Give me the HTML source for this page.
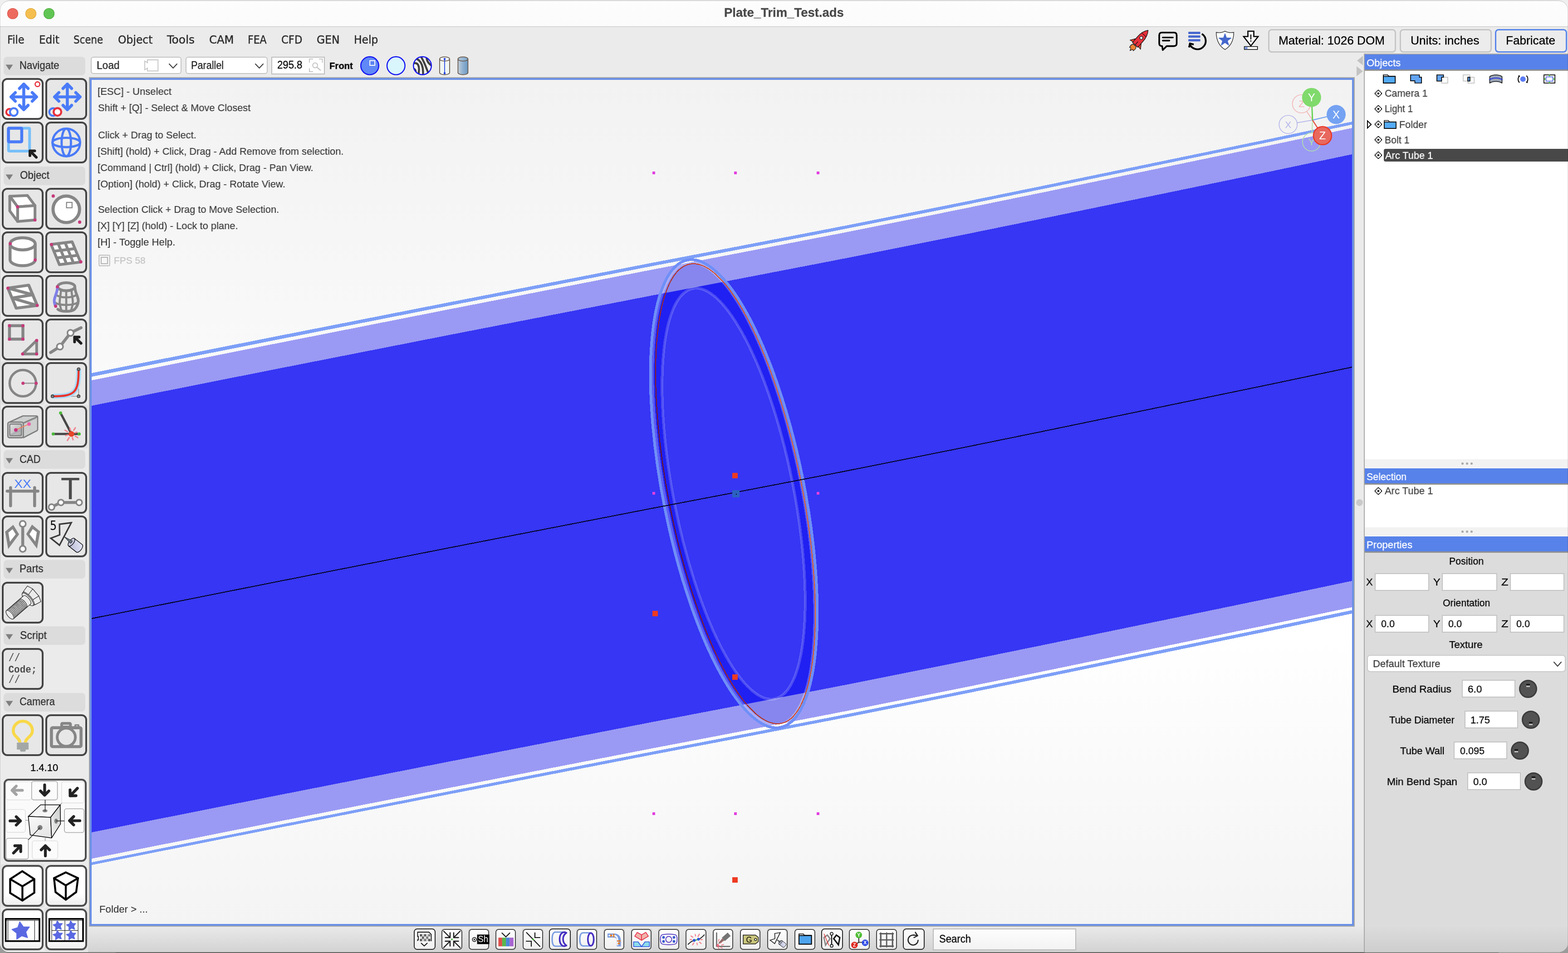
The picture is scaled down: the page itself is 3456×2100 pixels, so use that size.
<!DOCTYPE html>
<html lang="en"><head><meta charset="utf-8"><title>Plate_Trim_Test.ads</title>
<style>
*{box-sizing:border-box;margin:0;padding:0}
html,body{width:3456px;height:2100px;overflow:hidden;background:linear-gradient(#efefef 0,#efefef 50%,#a4a4a4 98%,#9a9a9a 100%)}
body{font-family:"Liberation Sans",sans-serif;color:#000;position:relative}
#app{position:absolute;left:0;top:0;width:3456px;height:2100px;overflow:hidden;background:#ebebeb;clip-path:inset(1px 0 0.5px 0 round 21px)}
#winframe{left:0;top:1px;width:3456px;height:2098.5px;border-radius:21px;box-shadow:inset 0 1px 0 #bdbdbd,inset 0 0 0 1px rgba(0,0,0,0.13),inset 0 -1.5px 0 rgba(0,0,0,0.42);pointer-events:none}
.t,svg{will-change:transform}
#app *{position:absolute}
button{font:inherit;padding:0}
.t{white-space:pre;line-height:1;transform-origin:0 0;display:block;font-weight:400;-webkit-text-stroke-width:0.3px}
svg{overflow:visible}
.titlebar{left:0;top:0;width:3456px;height:58px;background:linear-gradient(#fdfdfd,#fbfbfb)}
.titlebar-line{left:0;top:58px;width:3456px;height:1px;background:#c8c8c8}
.tl{width:24px;height:24px;border-radius:50%;top:18px}
.hdr{background:#dcdcdc;border-radius:8px;left:8px;width:180px;height:41px}

.bbar{left:194px;top:2042px;width:2812px;height:58px;background:linear-gradient(#e9e9e9,#d2d2d2)}
.bb{top:2047.4px;width:45.2px;height:45.2px;border:2px solid #474747;border-radius:7px;background:linear-gradient(#fdfdfd,#f0f0f0)}
.bb.big{top:2046.2px;width:47.6px;height:47.2px;border:2px solid #2a2a2a;border-radius:7.5px}
.bb.big svg{left:-0.8px;top:-1.3px}
.bbk{top:2046px;width:48px;height:48px;background:#dbdbdb;border-radius:3px}
.search{left:2056.4px;top:2046.3px;width:315.4px;height:47.3px;border:2px solid #bababa;background:linear-gradient(#fdfdfd,#f3f3f3)}

.menu{left:0;top:60px;width:1000px;height:60px}
.combo{top:125px;height:38px;background:#fff;border:2px solid #c4c4c4;border-radius:6px}
.btn{top:64px;height:52px;border:3px solid #c6c6c6;border-radius:8px;background:#ececec}
.btn.pri{border-color:#5a86ea}

.lp{left:0;top:120px;width:196px;height:1980px}
.tb{width:92px;height:92px;border:4px solid #454545;border-radius:12px;background:#e7e7e7}
.tb.on{background:#fff}
.tb.wh{background:linear-gradient(#fff 70%,#efefef);border-color:#4c4c4c}
.tb svg{left:-4px;top:-4px}
.hl{width:96px;height:96px;background:#e1e1e1;border-radius:4px}

.rp{left:3006px;top:118px;width:450px;height:1982px;background:#a8a8a8}
.rp-in{left:3008px;top:120px;width:448px;height:1980px;background:#fff}
.ph{left:3008px;width:448px;height:36px;background:#5782e9;border-bottom:3px solid #8f8f8f}
.split{left:3008px;width:448px;height:19px;background:#f2f2f2}
.dot3{width:5px;height:5px;border-radius:50%;background:#a8a8a8}
.props{left:3008px;top:1218px;width:448px;height:882px;background:#dcdcdc}
.fld{background:#fff;border:2px solid #c3c3c3;height:39px}
.knob{width:40px;height:40px;border-radius:50%;background:#525252;border:3px solid #3b3b3b}
.rowsel{left:3050px;top:328px;width:410px;height:28px;background:#484848;border-radius:4px}
</style></head>
<body><main id="app">
<header class="titlebar"></header><div class="titlebar-line"></div><div style="left:0;top:59px;width:3456px;height:1px;background:#e2e2e2"></div>
<div class="tl" style="left:16px;background:#ed6a5f;box-shadow:inset 0 0 0 1px #d5554b"></div>
<div class="tl" style="left:56px;background:#f5bf4f;box-shadow:inset 0 0 0 1px #d9a33b"></div>
<div class="tl" style="left:96px;background:#61c554;box-shadow:inset 0 0 0 1px #4fa73f"></div>
<h1 class="t" style='left:1595.65px;top:15.02px;font-size:27.03px;transform:scaleX(1.0179);color:#484848;font-weight:700;'>Plate_Trim_Test.ads</h1>
<section id="viewport" style="left:196px;top:170px;width:2790px;height:1872px;background:#a9a9a9"></section>
<div style="left:198px;top:172px;width:2786px;height:1868px;background:#6a90e6"></div>
<svg id="scene" style="left:202px;top:176px" width="2778" height="1860" viewBox="202 176 2778 1860" shape-rendering="crispEdges">
<defs><linearGradient id="bgv" x1="0" y1="0" x2="0" y2="1"><stop offset="0" stop-color="#f2f2f2"/><stop offset="0.5" stop-color="#fdfdfd"/><stop offset="0.66" stop-color="#ffffff"/><stop offset="1" stop-color="#f4f4f4"/></linearGradient><clipPath id="vclip"><rect x="202" y="176" width="2778" height="1860"/></clipPath></defs>
<rect x="202" y="176" width="2778" height="1860" fill="url(#bgv)"/>
<g clip-path="url(#vclip)">
<polygon points="202,822.0 600,742.9 1000,664.2 1440,578.6 1620,544.2 1850,499.8 2100,450.0 2300,409.2 2800,305.9 2980,268.0 2980,274.5 2800,312.5 2300,416.1 2100,457.0 1850,507.0 1620,551.5 1440,585.9 1000,671.7 600,750.7 202,830.0" fill="#7d9ff7"/>
<polygon points="202,838.0 600,758.6 1000,679.6 1440,593.7 1620,559.2 1850,514.7 2100,464.6 2300,423.7 2800,320.0 2980,282.0 2980,1338.0 2800,1375.9 2300,1479.2 2100,1520.0 1850,1569.8 1620,1614.2 1440,1648.6 1000,1734.2 600,1812.9 202,1892.0" fill="#9a9af4"/>
<polygon points="202,894.0 600,814.9 1000,736.2 1440,650.6 1620,616.2 1850,571.8 2100,522.0 2300,481.2 2800,377.9 2980,340.0 2980,1280.0 2800,1317.9 2300,1421.2 2100,1462.0 1850,1511.8 1620,1556.2 1440,1590.6 1000,1676.2 600,1754.9 202,1834.0" fill="#3636f4"/>
<polygon points="202,1900.0 600,1820.7 1000,1741.7 1440,1655.9 1620,1621.5 1850,1577.0 2100,1527.0 2300,1486.1 2800,1382.5 2980,1344.5 2980,1352.0 2800,1389.9 2300,1493.2 2100,1534.0 1850,1583.8 1620,1628.2 1440,1662.6 1000,1748.2 600,1826.9 202,1906.0" fill="#7d9ff7"/>
<defs><clipPath id="dk"><polygon points="202,894.0 600,814.9 1000,736.2 1440,650.6 1620,616.2 1850,571.8 2100,522.0 2300,481.2 2800,377.9 2980,340.0 2980,1280.0 2800,1317.9 2300,1421.2 2100,1462.0 1850,1511.8 1620,1556.2 1440,1590.6 1000,1676.2 600,1754.9 202,1834.0"/></clipPath><linearGradient id="redg" gradientUnits="userSpaceOnUse" x1="1445" y1="0" x2="1797" y2="0"><stop offset="0" stop-color="#4a0618"/><stop offset="0.2" stop-color="#a02418"/><stop offset="0.5" stop-color="#c83418"/><stop offset="0.8" stop-color="#e8601c"/><stop offset="1" stop-color="#f07828"/></linearGradient></defs>
<g id="ring" shape-rendering="crispEdges">
<path d="M1761.2,1059.2 L1769.4,1103.5 L1776.5,1147.6 L1782.4,1191.2 L1787.0,1234.1 L1790.3,1275.8 L1792.3,1316.1 L1793.0,1354.7 L1792.3,1391.2 L1790.3,1425.5 L1787.0,1457.2 L1782.4,1486.0 L1776.5,1511.9 L1769.4,1534.5 L1761.2,1553.7 L1751.8,1569.3 L1741.4,1581.4 L1730.1,1589.6 L1717.9,1594.0 L1705.0,1594.6 L1691.4,1591.3 L1677.2,1584.2 L1662.5,1573.3 L1647.6,1558.8 L1632.3,1540.6 L1617.0,1519.0 L1601.7,1494.1 L1586.4,1466.2 L1571.4,1435.3 L1556.8,1401.8 L1542.6,1365.9 L1529.0,1327.9 L1516.1,1288.1 L1503.9,1246.7 L1492.6,1204.2 L1482.2,1160.7 L1472.8,1116.8 L1464.6,1072.5 L1457.5,1028.4 L1451.6,984.8 L1447.0,941.9 L1443.7,900.2 L1441.7,859.9 L1441.0,821.3 L1441.7,784.8 L1443.7,750.5 L1447.0,718.8 L1451.6,690.0 L1457.5,664.1 L1464.6,641.5 L1472.8,622.3 L1482.2,606.7 L1492.6,594.6 L1503.9,586.4 L1516.1,582.0 L1529.0,581.4 L1542.6,584.7 L1556.8,591.8 L1571.5,602.7 L1586.4,617.2 L1601.7,635.4 L1617.0,657.0 L1632.3,681.9 L1647.6,709.8 L1662.6,740.7 L1677.2,774.2 L1691.4,810.1 L1705.0,848.1 L1717.9,887.9 L1730.1,929.3 L1741.4,971.8 L1751.8,1015.3Z M1746.5,1062.2 L1753.8,1101.7 L1760.1,1141.1 L1765.4,1180.1 L1769.5,1218.4 L1772.4,1255.7 L1774.2,1291.7 L1774.8,1326.2 L1774.1,1358.8 L1772.3,1389.4 L1769.3,1417.7 L1765.1,1443.5 L1759.8,1466.6 L1753.4,1486.8 L1746.0,1504.0 L1737.6,1518.0 L1728.3,1528.7 L1718.1,1536.1 L1707.2,1540.1 L1695.5,1540.6 L1683.3,1537.7 L1670.6,1531.4 L1657.5,1521.7 L1644.0,1508.6 L1630.4,1492.4 L1616.6,1473.1 L1602.9,1450.9 L1589.2,1425.9 L1575.8,1398.4 L1562.7,1368.5 L1550.0,1336.4 L1537.8,1302.5 L1526.2,1266.9 L1515.3,1230.0 L1505.2,1191.9 L1495.9,1153.1 L1487.5,1113.8 L1480.2,1074.3 L1473.9,1034.9 L1468.6,995.9 L1464.5,957.6 L1461.6,920.3 L1459.8,884.3 L1459.2,849.8 L1459.9,817.2 L1461.7,786.6 L1464.7,758.3 L1468.9,732.5 L1474.2,709.4 L1480.6,689.2 L1488.0,672.0 L1496.4,658.0 L1505.7,647.3 L1515.9,639.9 L1526.8,635.9 L1538.5,635.4 L1550.7,638.3 L1563.4,644.6 L1576.5,654.3 L1590.0,667.4 L1603.6,683.6 L1617.4,702.9 L1631.1,725.1 L1644.8,750.1 L1658.2,777.6 L1671.3,807.5 L1684.0,839.6 L1696.2,873.5 L1707.8,909.1 L1718.7,946.0 L1728.8,984.1 L1738.1,1022.9Z" fill="#8686ee" fill-rule="evenodd"/>
<path d="M1761.2,1059.2 L1769.4,1103.5 L1776.5,1147.6 L1782.4,1191.2 L1787.0,1234.1 L1790.3,1275.8 L1792.3,1316.1 L1793.0,1354.7 L1792.3,1391.2 L1790.3,1425.5 L1787.0,1457.2 L1782.4,1486.0 L1776.5,1511.9 L1769.4,1534.5 L1761.2,1553.7 L1751.8,1569.3 L1741.4,1581.4 L1730.1,1589.6 L1717.9,1594.0 L1705.0,1594.6 L1691.4,1591.3 L1677.2,1584.2 L1662.5,1573.3 L1647.6,1558.8 L1632.3,1540.6 L1617.0,1519.0 L1601.7,1494.1 L1586.4,1466.2 L1571.4,1435.3 L1556.8,1401.8 L1542.6,1365.9 L1529.0,1327.9 L1516.1,1288.1 L1503.9,1246.7 L1492.6,1204.2 L1482.2,1160.7 L1472.8,1116.8 L1464.6,1072.5 L1457.5,1028.4 L1451.6,984.8 L1447.0,941.9 L1443.7,900.2 L1441.7,859.9 L1441.0,821.3 L1441.7,784.8 L1443.7,750.5 L1447.0,718.8 L1451.6,690.0 L1457.5,664.1 L1464.6,641.5 L1472.8,622.3 L1482.2,606.7 L1492.6,594.6 L1503.9,586.4 L1516.1,582.0 L1529.0,581.4 L1542.6,584.7 L1556.8,591.8 L1571.5,602.7 L1586.4,617.2 L1601.7,635.4 L1617.0,657.0 L1632.3,681.9 L1647.6,709.8 L1662.6,740.7 L1677.2,774.2 L1691.4,810.1 L1705.0,848.1 L1717.9,887.9 L1730.1,929.3 L1741.4,971.8 L1751.8,1015.3Z M1746.5,1062.2 L1753.8,1101.7 L1760.1,1141.1 L1765.4,1180.1 L1769.5,1218.4 L1772.4,1255.7 L1774.2,1291.7 L1774.8,1326.2 L1774.1,1358.8 L1772.3,1389.4 L1769.3,1417.7 L1765.1,1443.5 L1759.8,1466.6 L1753.4,1486.8 L1746.0,1504.0 L1737.6,1518.0 L1728.3,1528.7 L1718.1,1536.1 L1707.2,1540.1 L1695.5,1540.6 L1683.3,1537.7 L1670.6,1531.4 L1657.5,1521.7 L1644.0,1508.6 L1630.4,1492.4 L1616.6,1473.1 L1602.9,1450.9 L1589.2,1425.9 L1575.8,1398.4 L1562.7,1368.5 L1550.0,1336.4 L1537.8,1302.5 L1526.2,1266.9 L1515.3,1230.0 L1505.2,1191.9 L1495.9,1153.1 L1487.5,1113.8 L1480.2,1074.3 L1473.9,1034.9 L1468.6,995.9 L1464.5,957.6 L1461.6,920.3 L1459.8,884.3 L1459.2,849.8 L1459.9,817.2 L1461.7,786.6 L1464.7,758.3 L1468.9,732.5 L1474.2,709.4 L1480.6,689.2 L1488.0,672.0 L1496.4,658.0 L1505.7,647.3 L1515.9,639.9 L1526.8,635.9 L1538.5,635.4 L1550.7,638.3 L1563.4,644.6 L1576.5,654.3 L1590.0,667.4 L1603.6,683.6 L1617.4,702.9 L1631.1,725.1 L1644.8,750.1 L1658.2,777.6 L1671.3,807.5 L1684.0,839.6 L1696.2,873.5 L1707.8,909.1 L1718.7,946.0 L1728.8,984.1 L1738.1,1022.9Z" fill="#2020f2" fill-rule="evenodd" clip-path="url(#dk)"/>
<ellipse cx="1617" cy="1088" rx="132" ry="461" transform="rotate(-11.28 1617 1088)" fill="none" stroke="#ffffff" stroke-opacity="0.19" stroke-width="6"/>
<ellipse cx="1617" cy="1088" rx="150" ry="519" transform="rotate(-11.28 1617 1088)" fill="none" stroke="#ffffff" stroke-opacity="0.19" stroke-width="6"/>
<ellipse cx="1617.5" cy="1088" rx="155.5" ry="525" transform="rotate(-11.28 1617.5 1088)" fill="none" stroke="#6f8ff8" stroke-width="6"/>
<ellipse cx="1621" cy="1088" rx="147" ry="516" transform="rotate(-11.28 1621 1088)" fill="none" stroke="url(#redg)" stroke-width="2"/>
</g>
<polyline points="202,1363.0 600,1283.9 1000,1205.2 1440,1119.6 1620,1085.2 1850,1040.8 2100,991.0 2300,950.2 2800,846.9 2980,809.0" fill="none" stroke="#02021c" stroke-width="2"/>
<rect x="1614" y="1042" width="12" height="12" fill="#ee3a22"/>
<rect x="1438" y="1346" width="12" height="12" fill="#ee3a22"/>
<rect x="1614" y="1486" width="12" height="12" fill="#ee3a22"/>
<rect x="1614" y="1933" width="12" height="12" fill="#ee3a22"/>
<rect x="1614" y="1080" width="16" height="16" fill="#2b62c0"/><rect x="1622" y="1088" width="2" height="2" fill="#050520"/>
<rect x="1438" y="378" width="6" height="6" fill="#e23fe0"/>
<rect x="1618" y="378" width="6" height="6" fill="#e23fe0"/>
<rect x="1800" y="378" width="6" height="6" fill="#e23fe0"/>
<rect x="1438" y="1084" width="6" height="6" fill="#e23fe0"/>
<rect x="1800" y="1084" width="6" height="6" fill="#e23fe0"/>
<rect x="1438" y="1790" width="6" height="6" fill="#e23fe0"/>
<rect x="1618" y="1790" width="6" height="6" fill="#e23fe0"/>
<rect x="1800" y="1790" width="6" height="6" fill="#e23fe0"/>
</g>
<g id="gizmo" shape-rendering="auto"><line x1="2892.9" y1="264.6" x2="2879.8" y2="245.3" stroke="#f3b4b4" stroke-width="1.8"/><line x1="2892.9" y1="264.6" x2="2858.9" y2="270.7" stroke="#b4b4ea" stroke-width="1.8"/><line x1="2892.9" y1="264.6" x2="2891.7" y2="292.8" stroke="#b2e4a6" stroke-width="1.8"/><circle cx="2868.6" cy="228.8" r="20" fill="none" stroke="#f3b4b4" stroke-width="1.6"/><text x="2868.6" y="236.4" font-family="Liberation Sans, sans-serif" text-anchor="middle" font-size="21" fill="#f3b4b4">Z</text><circle cx="2839.2" cy="274.3" r="20" fill="none" stroke="#b4b4ea" stroke-width="1.6"/><text x="2839.2" y="281.90000000000003" font-family="Liberation Sans, sans-serif" text-anchor="middle" font-size="21" fill="#b4b4ea">X</text><circle cx="2890.8" cy="312.8" r="20" fill="none" stroke="#b2e4a6" stroke-width="1.6"/><text x="2890.8" y="320.40000000000003" font-family="Liberation Sans, sans-serif" text-anchor="middle" font-size="21" fill="#b2e4a6">Y</text><line x1="2892.9" y1="264.6" x2="2945" y2="252.3" stroke="#74a2f2" stroke-width="2.2"/><line x1="2892.9" y1="264.6" x2="2914.9" y2="298.9" stroke="#e24a3a" stroke-width="2.2"/><line x1="2892.9" y1="264.6" x2="2890.8" y2="214.7" stroke="#62d250" stroke-width="2.8"/><circle cx="2945" cy="252.3" r="21" fill="#74a2f2"/><text x="2945" y="260.6" font-family="Liberation Sans, sans-serif" text-anchor="middle" font-size="24" fill="#fff">X</text><circle cx="2914.9" cy="298.9" r="20" fill="#e8685e" stroke="#ea3422" stroke-width="2.4"/><text x="2914.9" y="307.4" font-family="Liberation Sans, sans-serif" text-anchor="middle" font-size="24" fill="#fff">Z</text><circle cx="2890.8" cy="214.7" r="21" fill="#80da6c"/><text x="2890.8" y="223" font-family="Liberation Sans, sans-serif" text-anchor="middle" font-size="24" fill="#fff">Y</text></g>
</svg>
<footer class="bbar"></footer>
<div style="left:0;top:2098px;width:3456px;height:2px;background:#8c8c8c"></div>
<button class="bb big" style="left:912.4px"><svg width="46" height="46" viewBox="0 0 46 46" style="left:-2px;top:-2px"><path d="M8.5,27.5V25H10V17.5H8.5V8H33.5L38.5,13V28" fill="none" stroke="#111" stroke-width="1.8"/><rect x="13.5" y="12.5" width="4.6" height="5.2" fill="#4e4e4e"/><rect x="18.1" y="12.5" width="4.6" height="5.2" fill="#cfcfcf"/><rect x="22.7" y="12.5" width="4.6" height="5.2" fill="#5a5a5a"/><rect x="27.3" y="12.5" width="4.6" height="5.2" fill="#cfcfcf"/><rect x="31.9" y="12.5" width="4.6" height="5.2" fill="#777"/><rect x="13.5" y="17.7" width="4.6" height="5.2" fill="#e4e4e4"/><rect x="18.1" y="17.7" width="4.6" height="5.2" fill="#5a5a5a"/><rect x="22.7" y="17.7" width="4.6" height="5.2" fill="#e4e4e4"/><rect x="27.3" y="17.7" width="4.6" height="5.2" fill="#777"/><rect x="31.9" y="17.7" width="4.6" height="5.2" fill="#e4e4e4"/><rect x="13.5" y="22.9" width="4.6" height="5.2" fill="#5a5a5a"/><rect x="18.1" y="22.9" width="4.6" height="5.2" fill="#cfcfcf"/><rect x="22.7" y="22.9" width="4.6" height="5.2" fill="#777"/><rect x="27.3" y="22.9" width="4.6" height="5.2" fill="#cfcfcf"/><rect x="31.9" y="22.9" width="4.6" height="5.2" fill="#4e4e4e"/><path d="M16.5,32.5L23,38.5L29.5,32.5" fill="none" stroke="#111" stroke-width="2" stroke-linecap="round"/></svg></button>
<div class="bbk" style="left:972.0px"></div>
<button class="bb" style="left:973.4px"><svg width="46" height="46" viewBox="0 0 46 46" style="left:-2px;top:-2px"><g stroke="#1a1a1a" stroke-width="2.4" fill="none" stroke-linecap="round"><path d="M5,5L19,19M19,8.5V19H8.5"/><path d="M41,5L27,19M27,8.5V19H37.5"/><path d="M5,41L19,27M19,37.5V27H8.5"/><path d="M41,41L27,27M27,37.5V27H37.5"/></g><circle cx="23" cy="23" r="1.9" fill="#48b83a"/></svg></button>
<div class="bbk" style="left:1031.9px"></div>
<button class="bb" style="left:1033.3px"><svg width="46" height="46" viewBox="0 0 46 46" style="left:-2px;top:-2px"><rect x="18.6" y="12.4" width="27" height="21" fill="#000"/><circle cx="12.6" cy="23.2" r="4.4" fill="none" stroke="#1a1a1a" stroke-width="1.7"/><circle cx="12.6" cy="23.2" r="1.7" fill="#1a1a1a"/><text x="20.6" y="28.8" font-family="Liberation Sans, sans-serif" font-size="19.5" fill="#fff" textLength="22.5" lengthAdjust="spacingAndGlyphs">Sh</text></svg></button>
<button class="bb" style="left:1092.3px"><svg width="46" height="46" viewBox="0 0 46 46" style="left:-2px;top:-2px"><rect x="6.5" y="19.2" width="8.4" height="19" fill="#e0504c"/><rect x="14.8" y="19.2" width="8.4" height="19" fill="#58b84c"/><rect x="23.1" y="19.2" width="8.4" height="19" fill="#4c86d8"/><rect x="31.4" y="19.2" width="8.4" height="19" fill="#a864d0"/><path d="M14.5,9L23,17.5L31.5,9" fill="none" stroke="#1a1a1a" stroke-width="2.2" stroke-linecap="round"/></svg></button>
<div class="bbk" style="left:1150.4px"></div>
<button class="bb" style="left:1151.8px"><svg width="46" height="46" viewBox="0 0 46 46" style="left:-2px;top:-2px"><g stroke="#1a1a1a" stroke-width="2.2" fill="none" stroke-linecap="round"><path d="M8.5,8L38,38.5"/><path d="M27,8.5V19H38"/><path d="M8,27H19V38"/></g><circle cx="23.2" cy="23.2" r="1.9" fill="#48b83a"/></svg></button>
<button class="bb big" style="left:1210.1px"><svg width="46" height="46" viewBox="0 0 46 46" style="left:-2px;top:-2px"><path d="M30,8H14.5C9,8 7,14 7,23.5C7,33 9,39 14.5,39H30" fill="none" stroke="#7c9fe2" stroke-width="3.2"/><path d="M38.5,9.5C30,5 23.5,12 23.5,23.5C23.5,35 30,42 38.5,37.5C33,34 31,29 31,23.5C31,18 33,13 38.5,9.5Z" fill="none" stroke="#452fc2" stroke-width="3.6" stroke-linejoin="round"/></svg></button>
<div class="bbk" style="left:1269.8px"></div>
<button class="bb" style="left:1271.2px"><svg width="46" height="46" viewBox="0 0 46 46" style="left:-2px;top:-2px"><path d="M30,8.5H14.5C9,8.5 7,14 7,23C7,32 9,37.5 14.5,37.5H30" fill="none" stroke="#7c9fe2" stroke-width="3.2"/><ellipse cx="31.2" cy="23" rx="6.5" ry="14" fill="none" stroke="#452fc2" stroke-width="3.6"/></svg></button>
<div class="bbk" style="left:1329.8px"></div>
<button class="bb" style="left:1331.2px"><svg width="46" height="46" viewBox="0 0 46 46" style="left:-2px;top:-2px"><path d="M8,14.5H22C30,14.5 33,19 33,27V38.5" fill="none" stroke="#7c9fe2" stroke-width="9"/><path d="M10.5,14.5H22C27.5,14.5 30.3,18 30.3,27V36" fill="none" stroke="#fafafa" stroke-width="3"/><g fill="#e87a1e"><path d="M14,11L19.5,14.5L14,18Z"/><rect x="20.4" y="10.5" width="2.6" height="8"/><rect x="29" y="25.2" width="8" height="2.6"/><path d="M29.5,33.5L33,28.5L36.5,33.5Z"/></g></svg></button>
<div class="bbk" style="left:1389.8px"></div>
<button class="bb" style="left:1391.2px"><svg width="46" height="46" viewBox="0 0 46 46" style="left:-2px;top:-2px"><g stroke="#e8304e" stroke-width="1.6" fill="#f0b4aa" stroke-linejoin="round"><polygon points="8,16 13.5,7.5 23,13 23,25"/><polygon points="38,16 32.5,7.5 23,13 23,25"/></g><path d="M5.5,28.5H15.5L23,39L30.5,28.5H40.5V39H5.5Z" fill="#8edcea" stroke="#2a50e0" stroke-width="1.6" stroke-linejoin="miter"/></svg></button>
<div class="bbk" style="left:1450.0px"></div>
<button class="bb" style="left:1451.4px"><svg width="46" height="46" viewBox="0 0 46 46" style="left:-2px;top:-2px"><path d="M9.5,12.5C18,11 28,11 36.5,12.5C40.5,13.2 41.5,17 41.5,23C41.5,29 40.5,32.8 36.5,33.5C28,35 18,35 9.5,33.5C5.5,32.8 4.5,29 4.5,23C4.5,17 5.5,13.2 9.5,12.5Z" fill="none" stroke="#5030c2" stroke-width="1.7"/><circle cx="23" cy="23" r="6.6" fill="none" stroke="#5030c2" stroke-width="1.7"/><circle cx="11.5" cy="18.5" r="2.9" fill="#3a5cd0"/><circle cx="11.5" cy="27.5" r="2.9" fill="#3a5cd0"/><circle cx="34.5" cy="18.5" r="2.9" fill="#3a5cd0"/><circle cx="34.5" cy="27.5" r="2.9" fill="#3a5cd0"/></svg></button>
<button class="bb" style="left:1511.4px"><svg width="46" height="46" viewBox="0 0 46 46" style="left:-2px;top:-2px"><path d="M27.5,16.6L30.5,11.4M22.1,15.6L21.5,12.2M16.1,18.3L12.0,15.5M13.5,23.5L10.0,23.5M18.3,30.9L15.5,35.0M25.2,31.3L25.9,34.7M30.6,29.0L34.5,32.1M33.5,23.5L37.0,23.5" stroke="#f0868e" stroke-width="2.3" stroke-linecap="round" fill="none"/><path d="M5,34.5C12,28 14,26.5 19,25.5L28.5,23C34,21 37,17 42,12.5" fill="none" stroke="#2a2a2a" stroke-width="2"/><path d="M19,25.5L28.5,23" stroke="#58c846" stroke-width="2.6"/><circle cx="19" cy="25.2" r="3.1" fill="#2f56d8"/><circle cx="28.5" cy="22.6" r="3.1" fill="#2f56d8"/></svg></button>
<button class="bb" style="left:1571.3px"><svg width="46" height="46" viewBox="0 0 46 46" style="left:-2px;top:-2px"><path d="M8.5,8.5V38.5H37.5" fill="none" stroke="#4a4a4a" stroke-width="2" stroke-linecap="round"/><path d="M8.5,38.5A6,6 0 0 0 14.5,38.5V36A4,4 0 0 0 9,33Z" fill="#f0607a" opacity="0.85"/><path d="M12.6,27.3L13.8,23.0M16.9,31.2L20.0,28.6M19.4,35.4L23.8,34.6M17.3,40.4L20.9,42.1M12.0,40.5L13.5,43.1" stroke="#f0868e" stroke-width="2" stroke-linecap="round" fill="none"/><g transform="translate(13.5,31.5) rotate(-41)"><rect x="13" y="-5" width="17" height="10" fill="#747474"/><path d="M13,-3.4L1.5,-1.4V1.4L13,3.4Z" fill="#946a6a"/><path d="M1.5,-1.2L-1.5,0L1.5,1.2Z" fill="#333"/></g></svg></button>
<div class="bbk" style="left:1629.8px"></div>
<button class="bb" style="left:1631.2px"><svg width="46" height="46" viewBox="0 0 46 46" style="left:-2px;top:-2px"><path d="M7,13.5H34L40.5,18.5V28L34,33H7Z" fill="#c9c57c" stroke="#111" stroke-width="1.5" stroke-linejoin="miter"/><circle cx="34.3" cy="23.3" r="2.4" fill="#fff" stroke="#111" stroke-width="1.3"/><text x="13.6" y="30" font-family="Liberation Sans, sans-serif" font-size="17.5" fill="#000" textLength="13" lengthAdjust="spacingAndGlyphs">G</text></svg></button>
<div class="bbk" style="left:1689.8px"></div>
<button class="bb" style="left:1691.2px"><svg width="46" height="46" viewBox="0 0 46 46" style="left:-2px;top:-2px"><defs><linearGradient id="bg14" x1="0" y1="1" x2="1" y2="0"><stop offset="0" stop-color="#b9bbd6"/><stop offset="1" stop-color="#e6e9fa"/></linearGradient></defs><polygon points="16.5,10 28.8,8 16.5,32.5 6.5,24.8 17,21.5" fill="none" stroke="#2a2a2a" stroke-width="1.7"/><g transform="translate(29,29.5) rotate(38)"><path d="M0,-5.2H11A2.5,5.2 0 0 1 11,5.2H0Z" fill="url(#bg14)" stroke="#111" stroke-width="0.9"/><ellipse cx="0" cy="0" rx="2.5" ry="5.2" fill="#c3c5da" stroke="#111" stroke-width="0.9"/><path d="M-9.5,0.2L-0.5,-1.7V1.7Z" fill="#6e7c88" stroke="#222" stroke-width="0.8"/></g></svg></button>
<button class="bb" style="left:1751.4px"><svg width="46" height="46" viewBox="0 0 46 46" style="left:-2px;top:-2px"><path d="M10,11H19.5L22,14H37.5V33.5H10Z" fill="#fff" stroke="#000" stroke-width="1.7"/><path d="M10,14.5H37.5V33.5H10Z" fill="#4ea4ee" stroke="#000" stroke-width="1.9"/></svg></button>
<button class="bb big" style="left:1810.2px"><svg width="46" height="46" viewBox="0 0 46 46" style="left:-2px;top:-2px"><path d="M23,13.5V37" stroke="#111" stroke-width="2.2"/><circle cx="23" cy="11.6" r="3.1" fill="#fff" stroke="#111" stroke-width="1.6"/><circle cx="23" cy="38.2" r="3.1" fill="#fff" stroke="#111" stroke-width="1.6"/><polygon points="13.5,14.5 19.5,22.5 9.5,36.5 6,20" fill="none" stroke="#8a8a8a" stroke-width="3"/><polygon points="33.5,14.5 27.5,22.5 38,36 41,20" fill="none" stroke="#111" stroke-width="3"/><path d="M6,11.5L17,37.5" stroke="#e82a2a" stroke-width="1.4"/></svg></button>
<button class="bb" style="left:1871.4px"><svg width="46" height="46" viewBox="0 0 46 46" style="left:-2px;top:-2px"><path d="M21.8,13.5V29.5H34M21.8,29.5L12.5,35" fill="none" stroke="#3a3a3a" stroke-width="2.2"/><circle cx="21.8" cy="13.3" r="7.2" fill="#50be38"/><text x="21.8" y="17.2" font-family="Liberation Sans, sans-serif" font-weight="bold" font-size="10.5" fill="#fff" text-anchor="middle">Y</text><circle cx="35.8" cy="30.5" r="7.2" fill="#2a48e4"/><text x="35.8" y="34.4" font-family="Liberation Sans, sans-serif" font-weight="bold" font-size="10.5" fill="#fff" text-anchor="middle">X</text><circle cx="12.3" cy="35.4" r="7.2" fill="#e0281e"/><text x="12.3" y="39.3" font-family="Liberation Sans, sans-serif" font-weight="bold" font-size="10.5" fill="#fff" text-anchor="middle">Z</text></svg></button>
<button class="bb" style="left:1931.4px"><svg width="46" height="46" viewBox="0 0 46 46" style="left:-2px;top:-2px"><g stroke="#5c5c5c" stroke-width="2.8" fill="none" stroke-linecap="round"><rect x="10.2" y="10.5" width="26" height="27.5"/><path d="M23.2,9V39.5M8.5,24.2H38"/><path d="M8.5,10.5H38M8.5,38H38M10.2,9V39.5M36.2,9V39.5"/></g></svg></button>
<button class="bb big" style="left:1990.3px"><svg width="46" height="46" viewBox="0 0 46 46" style="left:-2px;top:-2px"><path d="M33.5,26A11,11 0 1 1 24,14.6" fill="none" stroke="#222" stroke-width="2.5" stroke-linecap="round"/><path d="M27.5,8.5L32.5,16L24.5,20" fill="none" stroke="#222" stroke-width="2.5" stroke-linecap="round" stroke-linejoin="round"/><path d="M24,14.6L32,15.8" stroke="#222" stroke-width="2.5" stroke-linecap="round"/></svg></button>
<div class="search"></div>
<span class="t" style='left:2069.72px;top:2057.56px;font-size:23.55px;transform:scaleX(0.9385);'>Search</span>
<nav class="menu"></nav>
<span class="t" style='left:15.59px;top:75.83px;font-size:24.14px;transform:scaleX(1.0425);color:#2c2c2c;font-family:"DejaVu Sans Condensed", "DejaVu Sans", sans-serif;-webkit-text-stroke:0.4px #2c2c2c;'>File</span>
<span class="t" style='left:85.54px;top:75.83px;font-size:24.14px;transform:scaleX(1.0647);color:#2c2c2c;font-family:"DejaVu Sans Condensed", "DejaVu Sans", sans-serif;-webkit-text-stroke:0.4px #2c2c2c;'>Edit</span>
<span class="t" style='left:161.81px;top:75.83px;font-size:24.14px;transform:scaleX(0.9848);color:#2c2c2c;font-family:"DejaVu Sans Condensed", "DejaVu Sans", sans-serif;-webkit-text-stroke:0.4px #2c2c2c;'>Scene</span>
<span class="t" style='left:259.99px;top:75.83px;font-size:24.14px;transform:scaleX(1.0820);color:#2c2c2c;font-family:"DejaVu Sans Condensed", "DejaVu Sans", sans-serif;-webkit-text-stroke:0.4px #2c2c2c;'>Object</span>
<span class="t" style='left:368.48px;top:75.83px;font-size:24.14px;transform:scaleX(1.1530);color:#2c2c2c;font-family:"DejaVu Sans Condensed", "DejaVu Sans", sans-serif;-webkit-text-stroke:0.4px #2c2c2c;'>Tools</span>
<span class="t" style='left:461.45px;top:75.83px;font-size:24.14px;transform:scaleX(1.1172);color:#2c2c2c;font-family:"DejaVu Sans Condensed", "DejaVu Sans", sans-serif;-webkit-text-stroke:0.4px #2c2c2c;'>CAM</span>
<span class="t" style='left:545.84px;top:75.83px;font-size:24.14px;transform:scaleX(1.0152);color:#2c2c2c;font-family:"DejaVu Sans Condensed", "DejaVu Sans", sans-serif;-webkit-text-stroke:0.4px #2c2c2c;'>FEA</span>
<span class="t" style='left:619.74px;top:75.83px;font-size:24.14px;transform:scaleX(1.0452);color:#2c2c2c;font-family:"DejaVu Sans Condensed", "DejaVu Sans", sans-serif;-webkit-text-stroke:0.4px #2c2c2c;'>CFD</span>
<span class="t" style='left:697.70px;top:75.83px;font-size:24.14px;transform:scaleX(1.0783);color:#2c2c2c;font-family:"DejaVu Sans Condensed", "DejaVu Sans", sans-serif;-webkit-text-stroke:0.4px #2c2c2c;'>GEN</span>
<span class="t" style='left:779.52px;top:75.83px;font-size:24.14px;transform:scaleX(1.0772);color:#2c2c2c;font-family:"DejaVu Sans Condensed", "DejaVu Sans", sans-serif;-webkit-text-stroke:0.4px #2c2c2c;'>Help</span>
<div class="combo" style="left:200px;width:199.5px"></div>
<span class="t" style='left:213.18px;top:132.56px;font-size:23.55px;transform:scaleX(0.9658);color:#1e1e1e;'>Load</span>
<svg style="left:316px;top:128px" width="36" height="32" viewBox="316 128 36 32" ><path d="M3325,131.8H3348.3V156.4H3325V150.2L3319,153.6V134.6L3325,138Z" fill="none" stroke="#cbcbcb" stroke-width="2.2" stroke-linejoin="miter" transform="translate(-3000,0)"/></svg>
<svg style="left:372px;top:140px" width="19" height="11" viewBox="0 0 19 11"><path d="M1,1L9.5,10L18,1" fill="none" stroke="#3c3c3c" stroke-width="2" stroke-linecap="round" stroke-linejoin="round"/></svg>
<div class="combo" style="left:408.5px;width:181px"></div>
<span class="t" style='left:421.27px;top:132.56px;font-size:23.55px;transform:scaleX(0.9177);color:#1e1e1e;'>Parallel</span>
<svg style="left:562px;top:140px" width="19" height="11" viewBox="0 0 19 11"><path d="M1,1L9.5,10L18,1" fill="none" stroke="#3c3c3c" stroke-width="2" stroke-linecap="round" stroke-linejoin="round"/></svg>
<div style="left:598px;top:124.5px;width:118px;height:39px;background:#fff;border:2px solid #bdbdbd"></div>
<span class="t" style='left:610.89px;top:132.26px;font-size:23.55px;transform:scaleX(0.9402);'>295.8</span>
<svg style="left:678px;top:126px" width="36" height="36" viewBox="678 126 36 36" ><g fill="none" stroke="#c6c6c6" stroke-width="2"><path d="M682,138V130H690M703,130H710.5V138M682,150.5V158H690"/><circle cx="694.6" cy="144" r="5.4"/><path d="M698.6,148L707,155.6" stroke-width="2.4"/></g></svg>
<span class="t" style='left:726.28px;top:134.53px;font-size:20.64px;transform:scaleX(0.9820);font-weight:700;'>Front</span>
<svg style="left:790px;top:120px" width="250" height="50" viewBox="790 120 250 50" ><defs><clipPath id="zc"><circle cx="931" cy="144.8" r="19.4"/></clipPath><linearGradient id="cy2" x1="0" y1="0" x2="1" y2="0"><stop offset="0" stop-color="#c4d0dc"/><stop offset="0.5" stop-color="#8fb0d0"/><stop offset="1" stop-color="#6a98c4"/></linearGradient><linearGradient id="cy2t" x1="0" y1="0" x2="1" y2="0"><stop offset="0" stop-color="#b6c8da"/><stop offset="1" stop-color="#7aa6cc"/></linearGradient></defs><circle cx="815" cy="144.8" r="19.8" fill="#6088f6" stroke="#1212f2" stroke-width="2.4"/><rect x="815.2" y="133.6" width="11" height="10.4" fill="#5d85f2" stroke="#fff" stroke-width="2"/><circle cx="872.8" cy="144.8" r="19.8" fill="#d9f6fd" stroke="#1212f2" stroke-width="2.4"/><circle cx="931" cy="144.8" r="19.8" fill="#f4f4f4"/><g clip-path="url(#zc)" fill="none" stroke="#404040" stroke-width="4.4"><path d="M910,140C922,136 926,146 922,166"/><path d="M914,128C930,132 934,150 932,168"/><path d="M926,122C936,136 940,152 946,166"/><path d="M940,124C940,136 946,142 954,146"/><path d="M908,152C916,150 918,158 915,166"/><path d="M950,128C950,134 953,136 958,136"/></g><circle cx="931" cy="144.8" r="19.8" fill="none" stroke="#1212f2" stroke-width="2.4"/><path d="M969,130V160A11,4.6 0 0 0 991,160V130" fill="#f1f7f3" stroke="#6a5b4e" stroke-width="1.8"/><ellipse cx="980" cy="130" rx="11" ry="4.6" fill="#f4f8f6" stroke="#6a5b4e" stroke-width="1.8"/><path d="M980,130V161.5" stroke="#2242e2" stroke-width="1.7"/><rect x="978" y="128" width="4" height="4" fill="#2242e2"/><rect x="978" y="159.5" width="4" height="4" fill="#2242e2"/><path d="M1009.4,130V160A11,4.6 0 0 0 1031.4,160V130" fill="url(#cy2)" stroke="#6a5b4e" stroke-width="1.8"/><ellipse cx="1020.4" cy="130" rx="11" ry="4.6" fill="url(#cy2t)" stroke="#6a5b4e" stroke-width="1.8"/></svg>
<svg style="left:2484px;top:62px" width="50" height="56" viewBox="2484 62 50 56" ><g transform="translate(2511.5,88) rotate(41.5)"><path d="M-4,16C-7,19 -7,23 -5.5,27C-4,25.5 -3,25 -2,26.5C-1.5,28.5 -0.5,30 0,31.5C0.5,30 1.5,28.5 2,26.5C3,25 4,25.5 5.5,27C7,23 7,19 4,16Z" fill="#f08634" stroke="#111" stroke-width="1.2" stroke-linejoin="round"/><path d="M-7.8,3L-15.5,14L-7.5,12.5Z" fill="#f0482e" stroke="#111" stroke-width="1.2" stroke-linejoin="round"/><path d="M7.8,3L15.5,14L7.5,12.5Z" fill="#f0482e" stroke="#111" stroke-width="1.2" stroke-linejoin="round"/><path d="M0,-28.5C-6,-21 -8,-11 -8,-3V14.5H8V-3C8,-11 6,-21 0,-28.5Z" fill="#e8323c" stroke="#111" stroke-width="1.3" stroke-linejoin="round"/><path d="M-6.6,-15H6.6" stroke="#111" stroke-width="1.2"/><path d="M0,5V14" stroke="#111" stroke-width="1.2"/><circle cx="0" cy="-6" r="3.3" fill="#fff" stroke="#333" stroke-width="1.6"/></g></svg><svg style="left:2550px;top:66px" width="48" height="50" viewBox="2550 66 48 50" ><path d="M2561,71.8H2587.5Q2593.5,71.8 2593.5,77.8V95.6Q2593.5,101.6 2587.5,101.6H2571.5L2562.8,110.2L2561.5,101.6H2561Q2555,101.6 2555,95.6V77.8Q2555,71.8 2561,71.8Z" fill="none" stroke="#000" stroke-width="3.6" stroke-linejoin="round"/><path d="M2562.8,82.6H2585.2M2562.8,89.5H2577.4" stroke="#000" stroke-width="3.4" stroke-linecap="round"/></svg><svg style="left:2614px;top:64px" width="52" height="52" viewBox="2614 64 52 52" ><rect x="2619.1" y="70" width="26.5" height="5" rx="1" fill="#4768ce"/><rect x="2619.1" y="78.1" width="26.5" height="5" rx="1" fill="#4768ce"/><rect x="2619.1" y="86.2" width="26.5" height="5" rx="1" fill="#4768ce"/><path d="M2649.0,74.6A18.4,18.4 0 1 1 2621.9,96.5" fill="none" stroke="#000" stroke-width="3.9"/><path d="M2620.8,104.5L2622.8,95.8L2631,98" fill="none" stroke="#000" stroke-width="3.9" stroke-linejoin="miter"/></svg><svg style="left:2676px;top:64px" width="48" height="50" viewBox="2676 64 48 50" ><path d="M2700,68.6C2694,72 2687,72.5 2680.6,71.2C2681,88 2686,101 2700,109.2C2714,101 2719,88 2719.4,71.2C2713,72.5 2706,72 2700,68.6Z" fill="#fff" stroke="#2c2c2c" stroke-width="1.4" stroke-linejoin="round"/><polygon points="2700.0,74.4 2703.2,83.7 2713.1,83.9 2705.2,89.9 2708.1,99.4 2700.0,93.7 2691.9,99.4 2694.8,89.9 2686.9,83.9 2696.8,83.7" fill="#4668cc" stroke="#4668cc" stroke-width="1.6" stroke-linejoin="round"/></svg><svg style="left:2736px;top:64px" width="42" height="50" viewBox="2736 64 42 50" ><path d="M2750.5,68.8H2763.5V80.5H2773L2757,101L2741,80.5H2750.5Z" fill="#fff" stroke="#000" stroke-width="2.6" stroke-linejoin="miter"/><path d="M2757,76V87" stroke="#000" stroke-width="2.2"/><rect x="2755.8" y="89" width="2.4" height="2.6" fill="#000"/><rect x="2742.6" y="102.6" width="29" height="6.4" fill="#fff" stroke="#000" stroke-width="1.5"/><rect x="2743.4" y="103.4" width="6.2" height="4.8" fill="#7a98e0"/></svg>
<button class="btn" style="left:2794.5px;width:282.5px"></button>
<span class="t" style='left:2818.40px;top:75.86px;font-size:26.16px;'>Material: 1026 DOM</span>
<button class="btn" style="left:3084.5px;width:203px"></button>
<span class="t" style='left:3109.40px;top:75.86px;font-size:26.16px;transform:scaleX(1.0109);'>Units: inches</span>
<button class="btn pri" style="left:3294.5px;width:159.5px"></button>
<span class="t" style='left:3319.15px;top:75.86px;font-size:26.16px;'>Fabricate</span>
<aside class="lp"></aside>
<div class="hdr" style="top:124.5px"></div><svg style="left:12px;top:141.5px" width="17" height="13" viewBox="0 0 17 13"><path d="M0.5,0.5H16.5L8.5,12.5Z" fill="#7f7f7f"/></svg><h2 class="t" style='left:42.72px;top:132.81px;font-size:23.26px;transform:scaleX(0.9540);color:#2c2c2c;'>Navigate</h2>
<div class="hdr" style="top:366.5px"></div><svg style="left:12px;top:383.5px" width="17" height="13" viewBox="0 0 17 13"><path d="M0.5,0.5H16.5L8.5,12.5Z" fill="#7f7f7f"/></svg><h2 class="t" style='left:43.60px;top:374.81px;font-size:23.26px;transform:scaleX(0.9647);color:#2c2c2c;'>Object</h2>
<div class="hdr" style="top:992.3px"></div><svg style="left:12px;top:1009.3px" width="17" height="13" viewBox="0 0 17 13"><path d="M0.5,0.5H16.5L8.5,12.5Z" fill="#7f7f7f"/></svg><h2 class="t" style='left:43.40px;top:1000.61px;font-size:23.26px;transform:scaleX(0.9475);color:#2c2c2c;'>CAD</h2>
<div class="hdr" style="top:1234px"></div><svg style="left:12px;top:1251px" width="17" height="13" viewBox="0 0 17 13"><path d="M0.5,0.5H16.5L8.5,12.5Z" fill="#7f7f7f"/></svg><h2 class="t" style='left:42.70px;top:1242.31px;font-size:23.26px;transform:scaleX(0.9666);color:#2c2c2c;'>Parts</h2>
<div class="hdr" style="top:1380.3px"></div><svg style="left:12px;top:1397.3px" width="17" height="13" viewBox="0 0 17 13"><path d="M0.5,0.5H16.5L8.5,12.5Z" fill="#7f7f7f"/></svg><h2 class="t" style='left:43.58px;top:1388.61px;font-size:23.26px;transform:scaleX(0.9902);color:#2c2c2c;'>Script</h2>
<div class="hdr" style="top:1526.5px"></div><svg style="left:12px;top:1543.5px" width="17" height="13" viewBox="0 0 17 13"><path d="M0.5,0.5H16.5L8.5,12.5Z" fill="#7f7f7f"/></svg><h2 class="t" style='left:43.40px;top:1534.81px;font-size:23.26px;transform:scaleX(0.9430);color:#2c2c2c;'>Camera</h2>
<div class="tb on" style="left:4px;top:172px"><svg width="92" height="92" viewBox="0 0 92 92"><path d="M48.4,13.399999999999999V69.6M20.299999999999997,41.5H76.5M38.9,22.9L48.4,13.399999999999999L57.9,22.9M38.9,60.099999999999994L48.4,69.6L57.9,60.099999999999994M29.799999999999997,32.0L20.299999999999997,41.5L29.799999999999997,51.0M67.0,32.0L76.5,41.5L67.0,51.0" fill="none" stroke="#4a7bf7" stroke-width="6.6" stroke-linecap="round" stroke-linejoin="round"/><circle cx="78.6" cy="13.6" r="5.2" fill="#fff" stroke="#e8323c" stroke-width="2.6"/><circle cx="16.8" cy="75" r="7" fill="#fff" stroke="#e8323c" stroke-width="4.3"/><circle cx="26.4" cy="74.8" r="8.4" fill="#fff" stroke="#4a7bf7" stroke-width="4.4"/></svg></div>
<div class="tb" style="left:100px;top:172px"><svg width="92" height="92" viewBox="0 0 92 92"><path d="M48.4,13.399999999999999V69.6M20.299999999999997,41.5H76.5M38.9,22.9L48.4,13.399999999999999L57.9,22.9M38.9,60.099999999999994L48.4,69.6L57.9,60.099999999999994M29.799999999999997,32.0L20.299999999999997,41.5L29.799999999999997,51.0M67.0,32.0L76.5,41.5L67.0,51.0" fill="none" stroke="#4a7bf7" stroke-width="6.6" stroke-linecap="round" stroke-linejoin="round"/><circle cx="16.9" cy="74.8" r="8.3" fill="none" stroke="#4a7bf7" stroke-width="4.3"/><circle cx="26.6" cy="74.6" r="8.4" fill="#fff" stroke="#e8323c" stroke-width="4.4"/></svg></div>
<div class="tb" style="left:4px;top:268px"><svg width="92" height="92" viewBox="0 0 92 92"><rect x="14.8" y="14.5" width="46.4" height="50.4" rx="1.5" fill="none" stroke="#78c0fa" stroke-width="6"/><rect x="14.6" y="14.4" width="29.3" height="30" rx="1.5" fill="none" stroke="#4a7bf7" stroke-width="6.5"/><path d="M72.5,64.5H62V75M62,64.5L76,78.6" fill="none" stroke="#1e1e1e" stroke-width="6" stroke-linecap="round" stroke-linejoin="round"/></svg></div>
<div class="tb" style="left:100px;top:268px"><svg width="92" height="92" viewBox="0 0 92 92"><g fill="none" stroke="#4a7bf7" stroke-width="4.9"><circle cx="46.1" cy="45.9" r="30.4"/><ellipse cx="46.1" cy="45.9" rx="10.3" ry="30.4"/><ellipse cx="46.1" cy="45.9" rx="30.4" ry="10.3"/></g></svg></div>
<div class="tb" style="left:4px;top:414px"><svg width="92" height="92" viewBox="0 0 92 92"><g stroke="#868686" stroke-width="6" stroke-linejoin="round" fill="#fff"><polygon points="17.5,18.4 56.5,16.7 73.1,39 34.8,41.7"/><polygon points="34.8,41.7 73.1,39 73.1,70.7 34.8,74"/><polygon points="17.5,18.4 34.8,41.7 34.8,74 17.5,50.8"/></g><circle cx="34.8" cy="41.7" r="3.5" fill="#c63a7c"/><circle cx="73.1" cy="70.7" r="3.5" fill="#c63a7c"/></svg></div>
<div class="tb" style="left:100px;top:414px"><svg width="92" height="92" viewBox="0 0 92 92"><circle cx="46.1" cy="47.2" r="29.2" fill="#fff" stroke="#868686" stroke-width="6.9"/><rect x="46.6" y="32" width="12.2" height="11.9" fill="#fff" stroke="#868686" stroke-width="2.2"/><circle cx="17.3" cy="17.9" r="3.6" fill="#c63a7c"/><circle cx="75.6" cy="75.4" r="3.6" fill="#c63a7c"/></svg></div>
<div class="tb" style="left:4px;top:510px"><svg width="92" height="92" viewBox="0 0 92 92"><path d="M18.2,27.4V62.2A27.7,13.3 0 0 0 73.6,62.2V27.4" fill="#fff" stroke="#868686" stroke-width="6.5"/><ellipse cx="45.9" cy="27.4" rx="27.7" ry="13.3" fill="#fff" stroke="#868686" stroke-width="6.5"/><circle cx="18.6" cy="26.9" r="3.5" fill="#c63a7c"/><circle cx="73.5" cy="62.8" r="3.5" fill="#c63a7c"/></svg></div>
<div class="tb" style="left:100px;top:510px"><svg width="92" height="92" viewBox="0 0 92 92"><polygon points="12.6,28.6 59.0,22.9 77.4,67.5 31.0,73.2" fill="#fff" stroke="#868686" stroke-width="6.2" stroke-linejoin="round"/><path d="M28.1,26.7L46.5,71.3M18.7,43.5L65.1,37.8" stroke="#868686" stroke-width="6.2"/><path d="M43.5,24.8L61.9,69.4M24.9,58.3L71.3,52.6" stroke="#868686" stroke-width="6.2"/><circle cx="13.5" cy="28.7" r="3.5" fill="#c63a7c"/><circle cx="78.2" cy="67" r="3.5" fill="#c63a7c"/></svg></div>
<div class="tb" style="left:4px;top:606px"><svg width="92" height="92" viewBox="0 0 92 92"><polygon points="13.5,28.9 59.3,22.4 78,67.1 31.7,73.1" fill="#fff" stroke="#868686" stroke-width="6.5" stroke-linejoin="round"/><polyline points="13.5,28.9 68.2,43.5 22.8,50.8 78,67.1" fill="none" stroke="#868686" stroke-width="6.5" stroke-linejoin="round"/><circle cx="13.5" cy="28.9" r="3.5" fill="#c63a7c"/><circle cx="78" cy="67.1" r="3.5" fill="#c63a7c"/></svg></div>
<div class="tb" style="left:100px;top:606px"><svg width="92" height="92" viewBox="0 0 92 92"><g fill="none" stroke="#868686" stroke-linecap="round"><path d="M65,26 C65,40 73.5,48 72.5,58 C71.5,68 68,72 64.5,75.5 C58,81.5 34,81.5 27.5,75.5" stroke-width="6"/><path d="M34.5,33 C34,45 30,55 32,66 L35,77 M46,35 V79 M57.5,33 C58,45 62,55 60,66 L57,77" stroke-width="4.6"/><path d="M24,44 C33,51 59,51 68,44 M20.5,60 C30,68 62,68 72,60" stroke-width="4.6"/><ellipse cx="46.1" cy="25.7" rx="18.9" ry="8.8" stroke-width="6"/></g><path d="M26.5,25.9 C27,40 19,48 19.6,58 C20,63 21,66 22.7,68.7" fill="none" stroke="#8080e8" stroke-width="6" stroke-linecap="round"/><circle cx="26.5" cy="25.9" r="3.5" fill="#c63a7c"/><circle cx="22.7" cy="68.7" r="3.5" fill="#c63a7c"/></svg></div>
<div class="tb" style="left:4px;top:702px"><svg width="92" height="92" viewBox="0 0 92 92"><rect x="16.9" y="15.7" width="29.6" height="29.6" fill="none" stroke="#868686" stroke-width="6.5"/><polygon points="76.8,48.2 45.9,78 76.8,78" fill="none" stroke="#868686" stroke-width="6" stroke-linejoin="round"/><circle cx="16.9" cy="15.7" r="3.5" fill="#c63a7c"/><circle cx="46.5" cy="15.7" r="3.5" fill="#c63a7c"/><circle cx="16.9" cy="45.3" r="3.5" fill="#c63a7c"/><circle cx="46.5" cy="45.3" r="3.5" fill="#c63a7c"/><circle cx="76.8" cy="48.2" r="3.5" fill="#c63a7c"/><circle cx="45.9" cy="78" r="3.5" fill="#c63a7c"/><circle cx="76.8" cy="78" r="3.5" fill="#c63a7c"/></svg></div>
<div class="tb" style="left:100px;top:702px"><svg width="92" height="92" viewBox="0 0 92 92"><polyline points="11.6,74.8 32.1,61.8 55.4,31.5 78.6,20.1" fill="none" stroke="#868686" stroke-width="6.5" stroke-linecap="round" stroke-linejoin="round"/><circle cx="32.1" cy="61.8" r="6.8" fill="#fff" stroke="#868686" stroke-width="3.5"/><circle cx="55.4" cy="31.5" r="6.8" fill="#fff" stroke="#868686" stroke-width="3.5"/><path d="M74.5,40.7H64.4V51.6M64.4,40.7L78.6,54.5" fill="none" stroke="#1e1e1e" stroke-width="6" stroke-linecap="round" stroke-linejoin="round"/></svg></div>
<div class="hl" style="left:2px;top:796px"></div>
<div class="tb" style="left:4px;top:798px"><svg width="92" height="92" viewBox="0 0 92 92"><circle cx="46.3" cy="46.4" r="29" fill="none" stroke="#868686" stroke-width="5.4"/><path d="M46.7,46.5H75.7" stroke="#a2a2a2" stroke-width="3"/><circle cx="46.7" cy="46.5" r="3.5" fill="#c63a7c"/><circle cx="75.7" cy="46.5" r="3.5" fill="#c63a7c"/></svg></div>
<div class="tb" style="left:100px;top:798px"><svg width="92" height="92" viewBox="0 0 92 92"><polyline points="15.7,75.2 73.3,75.2 73.3,15.5" fill="none" stroke="#6e6e6e" stroke-width="1"/><path d="M15.7,75.2C65.8,75.2 73.3,67.4 73.3,15.5" fill="none" stroke="#a9dcff" stroke-width="11"/><path d="M15.7,75.2C65.8,75.2 73.3,67.4 73.3,15.5" fill="none" stroke="#e8342a" stroke-width="4.5"/><circle cx="15.7" cy="75.2" r="3.2" fill="#7e7e7e" stroke="#333" stroke-width="1.3"/><circle cx="73.3" cy="75.2" r="3.2" fill="#7e7e7e" stroke="#333" stroke-width="1.3"/><circle cx="73.3" cy="15.5" r="3.2" fill="#7e7e7e" stroke="#333" stroke-width="1.3"/></svg></div>
<div class="tb" style="left:4px;top:894px"><svg width="92" height="92" viewBox="0 0 92 92"><defs><linearGradient id="tg1" x1="0" y1="0" x2="1" y2="1"><stop offset="0" stop-color="#e4e4e4"/><stop offset="1" stop-color="#a8a8a8"/></linearGradient><linearGradient id="tg2" x1="0" y1="0" x2="1" y2="0"><stop offset="0" stop-color="#f07050"/><stop offset="1" stop-color="#f89070"/></linearGradient></defs><g stroke="#7c7c7c" stroke-width="2.6" stroke-linejoin="round"><path d="M17,36L46.5,22.5H76Q79,22.5 79,25.5V52.5Q79,54 77.5,55L47.5,70.5Z" fill="#cdd0cf"/><path d="M47.5,38L79,24" fill="none"/><rect x="13.2" y="36" width="34.3" height="34.6" rx="4" fill="#c4c4c4"/><rect x="17.6" y="40.6" width="25.6" height="25.4" rx="2.5" fill="url(#tg1)" stroke-width="2.2"/></g><path d="M48.5,37L75.5,25.8M50,38.8L76,28" stroke="#8a8a8a" stroke-width="0.8" fill="none"/><path d="M19.5,63.5L42,52M21,65L43,54" stroke="#8a8aa0" stroke-width="0.8" fill="none"/><path d="M30.9,53.4L60,40.4" stroke="url(#tg2)" stroke-width="2"/><circle cx="30.9" cy="53.4" r="3.9" fill="#c8357f"/><circle cx="60" cy="40.4" r="3.9" fill="#f05fa8"/></svg></div>
<div class="hl" style="left:98px;top:892px"></div>
<div class="tb" style="left:100px;top:894px"><svg width="92" height="92" viewBox="0 0 92 92"><path d="M33.5,16.1L57.5,62M17.3,62.2H74.5" stroke="#474747" stroke-width="5" fill="none"/><path d="M62.5,54.1L66.0,48.6M48.8,57.2L43.2,54.0M55.3,54.0L54.1,49.6M65.6,59.6L69.4,58.3M65.7,67.0L71.4,70.2M59.7,70.4L61.0,75.2M52.5,70.3L48.5,76.6M49.3,64.4L44.9,65.6" stroke="#f0858f" stroke-width="3" stroke-linecap="round" fill="none"/><circle cx="57.5" cy="62.2" r="6.3" fill="#e84628"/><circle cx="33.5" cy="16.1" r="3.5" fill="#50bf40"/><circle cx="33.5" cy="16.1" r="0.7" fill="#2a6a20"/><circle cx="17.3" cy="62.2" r="3.5" fill="#50bf40"/><circle cx="17.3" cy="62.2" r="0.7" fill="#2a6a20"/><circle cx="74.5" cy="62.2" r="3.5" fill="#50bf40"/><circle cx="74.5" cy="62.2" r="0.7" fill="#2a6a20"/></svg></div>
<div class="tb" style="left:4px;top:1040px"><svg width="92" height="92" viewBox="0 0 92 92"><path d="M11.8,42.3H79.6M19.3,34.6V74.4M72.3,34.6V74.4" stroke="#868686" stroke-width="6.5" stroke-linecap="round" fill="none"/><text x="27.2" y="35" font-family="Liberation Sans, sans-serif" font-size="25.4" fill="#4a7bf7" textLength="37.6" lengthAdjust="spacingAndGlyphs">XX</text></svg></div>
<div class="tb" style="left:100px;top:1040px"><svg width="92" height="92" viewBox="0 0 92 92"><text x="33.8" y="59.7" font-family="Liberation Sans, sans-serif" font-size="67.7" fill="#4b4b4b" textLength="42.6" lengthAdjust="spacingAndGlyphs">T</text><polyline points="13.6,77.4 34.3,67.3 74.5,67.3" fill="none" stroke="#868686" stroke-width="6.5"/><circle cx="13.6" cy="77.4" r="6.4" fill="#fff" stroke="#868686" stroke-width="3.5"/><circle cx="34.3" cy="67.3" r="6.4" fill="#fff" stroke="#868686" stroke-width="3.5"/><circle cx="74.5" cy="67.3" r="6.4" fill="#fff" stroke="#868686" stroke-width="3.5"/></svg></div>
<div class="tb" style="left:4px;top:1136px"><svg width="92" height="92" viewBox="0 0 92 92"><path d="M46.1,18.4V73.5" stroke="#868686" stroke-width="6.5"/><circle cx="46.1" cy="18.4" r="6.7" fill="#fff" stroke="#868686" stroke-width="3.6"/><circle cx="46.1" cy="73.5" r="6.7" fill="#fff" stroke="#868686" stroke-width="3.6"/><polygon points="25.2,20.4 38,41.5 14,74 7.4,35.4" fill="#868686"/><polygon points="23.6,30.1 30.7,41.2 17.9,57.7 14.5,37.4" fill="#fff"/><polygon points="66.5,20 53.8,41.1 77.6,73.1 84.3,35" fill="#868686"/><polygon points="68.2,29.7 60.9,41.1 73.8,57.2 77.2,36.6" fill="#fff"/></svg></div>
<div class="tb" style="left:100px;top:1136px"><svg width="92" height="92" viewBox="0 0 92 92"><defs><linearGradient id="fg1" x1="0" y1="1" x2="1" y2="0"><stop offset="0" stop-color="#b9bbd6"/><stop offset="1" stop-color="#e6e9fa"/></linearGradient></defs><text x="10" y="31.5" font-family="DejaVu Sans, Liberation Sans, sans-serif" font-size="28" fill="#000" textLength="15.2" lengthAdjust="spacingAndGlyphs">5</text><polygon points="31.1,19.2 57.1,15.9 31.1,65.4 12,50 31.5,42.7" fill="none" stroke="#3a3a3a" stroke-width="3.3" stroke-linejoin="miter"/><g transform="translate(57.5,58.8) rotate(38)"><path d="M0,-10.5H22A5,10.5 0 0 1 22,10.5H0Z" fill="url(#fg1)" stroke="#000" stroke-width="1.3"/><ellipse cx="0" cy="0" rx="5" ry="10.5" fill="#c3c5da" stroke="#000" stroke-width="1.3"/><path d="M-19.5,0.3L-1,-3.2A1.5,3.2 0 0 1 -1,3.2Z" fill="#6e7c88" stroke="#222" stroke-width="1"/></g></svg></div>
<div class="tb" style="left:4px;top:1282px"><svg width="92" height="92" viewBox="0 0 92 92"><g transform="translate(17.8,72.6) rotate(-40.7) scale(1.14)" fill="#ececec" stroke="#262626" stroke-width="1.05" stroke-linejoin="round"><path d="M49,-17 L62,-20 L66,-9 L66,9 L62,20 L49,17 Z" fill="#ececec"/><path d="M49,-17 L52,-6 L52,7 L49,17 M52,-6 L66,-9 M52,7 L66,9" fill="none"/><ellipse cx="47" cy="0" rx="6" ry="16.5"/><ellipse cx="45.5" cy="0" rx="5.6" ry="15.5"/><path d="M34,-10.5H44A4.2,10.5 0 0 1 44,10.5H34Z"/><path d="M0,-10.5H35V10.5H0Z" stroke="none"/><path d="M0,-10.5H35M0,10.5H35" fill="none"/><path d="M2.6,-10.5A4.4,10.5 0 0 1 2.6,10.5" fill="none"/><path d="M5.2,-10.5A4.4,10.5 0 0 1 5.2,10.5" fill="none"/><path d="M7.800000000000001,-10.5A4.4,10.5 0 0 1 7.800000000000001,10.5" fill="none"/><path d="M10.4,-10.5A4.4,10.5 0 0 1 10.4,10.5" fill="none"/><path d="M13.0,-10.5A4.4,10.5 0 0 1 13.0,10.5" fill="none"/><path d="M15.6,-10.5A4.4,10.5 0 0 1 15.6,10.5" fill="none"/><path d="M18.200000000000003,-10.5A4.4,10.5 0 0 1 18.200000000000003,10.5" fill="none"/><path d="M20.8,-10.5A4.4,10.5 0 0 1 20.8,10.5" fill="none"/><path d="M23.400000000000002,-10.5A4.4,10.5 0 0 1 23.400000000000002,10.5" fill="none"/><path d="M26.000000000000004,-10.5A4.4,10.5 0 0 1 26.000000000000004,10.5" fill="none"/><path d="M28.6,-10.5A4.4,10.5 0 0 1 28.6,10.5" fill="none"/><path d="M31.200000000000003,-10.5A4.4,10.5 0 0 1 31.200000000000003,10.5" fill="none"/><path d="M33.800000000000004,-10.5A4.4,10.5 0 0 1 33.800000000000004,10.5" fill="none"/><ellipse cx="0" cy="0" rx="4.6" ry="10.5"/></g></svg></div>
<div class="tb" style="left:4px;top:1428px"><svg width="92" height="92" viewBox="0 0 92 92"><g font-family="Liberation Mono, monospace" fill="#4a4a4a"><text x="14.6" y="29.2" font-size="23" textLength="26" lengthAdjust="spacingAndGlyphs">//</text><text x="14.6" y="53.7" font-size="22.4" font-weight="bold" textLength="62.6" lengthAdjust="spacingAndGlyphs">Code;</text><text x="14.6" y="77.2" font-size="23" textLength="26" lengthAdjust="spacingAndGlyphs">//</text></g></svg></div>
<div class="tb" style="left:4px;top:1574px"><svg width="92" height="92" viewBox="0 0 92 92"><path d="M39.8,62 C39.8,52 25.2,49 25.2,36.3 A21.1,21.1 0 0 1 67.4,36.3 C67.4,49 52,52 52,62" fill="none" stroke="#f8d848" stroke-width="6.5"/><g fill="#a3a8a7"><rect x="32.9" y="62.2" width="26.4" height="5.6" rx="2.6"/><rect x="32.9" y="67.2" width="26.4" height="5.6" rx="2.6"/><rect x="32.9" y="72.2" width="26.4" height="5.6" rx="2.6"/><rect x="35" y="64" width="22" height="12"/><rect x="40.2" y="76" width="12.6" height="6.2" rx="2.4"/></g></svg></div>
<div class="tb" style="left:100px;top:1574px"><svg width="92" height="92" viewBox="0 0 92 92"><g fill="none" stroke="#868686"><rect x="13.4" y="29.6" width="65.2" height="41.6" rx="2.5" stroke-width="6.6"/><rect x="35.9" y="20.1" width="19.4" height="8" rx="1.5" stroke-width="6"/><rect x="65.5" y="23.5" width="8" height="4" rx="0.8" stroke-width="3"/><circle cx="46.1" cy="50.4" r="20" stroke-width="6"/></g></svg></div>
<span class="t" style='left:67.46px;top:1681.25px;font-size:21.8px;transform:scaleX(1.0086);'>1.4.10</span>
<div style="left:8.4px;top:1716px;width:183px;height:183px;border:4px solid #4e4e4e;border-radius:11px;background:#fafafa"><svg width="183" height="183" viewBox="0 0 183 183" style="left:-4px;top:-4px"><defs><linearGradient id="vc1" x1="0" y1="0" x2="0.6" y2="1"><stop offset="0" stop-color="#ececec"/><stop offset="1" stop-color="#fbfbfb"/></linearGradient><linearGradient id="vc2" x1="0" y1="0" x2="0.5" y2="1"><stop offset="0" stop-color="#fafafa"/><stop offset="1" stop-color="#e6e6e6"/></linearGradient><linearGradient id="vc3" x1="0" y1="1" x2="1" y2="0"><stop offset="0" stop-color="#f2f2f2"/><stop offset="1" stop-color="#c9cbca"/></linearGradient></defs><rect x="5.2" y="6.4" width="57" height="40.2" rx="4.5" fill="#fbfbfb" stroke="#e2e2e2" stroke-width="1.6"/><rect x="127.8" y="6.4" width="49.4" height="47" rx="4.5" fill="#fbfbfb" stroke="#e2e2e2" stroke-width="1.6"/><rect x="5.6" y="67.7" width="42.3" height="50.4" rx="4.5" fill="#fbfbfb" stroke="#e0e0e0" stroke-width="1.6"/><rect x="63.1" y="136.8" width="56.2" height="39.9" rx="4.5" fill="#fbfbfb" stroke="#e0e0e0" stroke-width="1.6"/><rect x="61.8" y="5.7" width="56.8" height="40.9" rx="4.5" fill="#fbfbfb" stroke="#a9a9a9" stroke-width="1.6"/><rect x="134" y="66.3" width="43.2" height="52.2" rx="4.5" fill="#fbfbfb" stroke="#a9a9a9" stroke-width="1.6"/><rect x="5.6" y="131.3" width="48.9" height="45.8" rx="4.5" fill="#fbfbfb" stroke="#a9a9a9" stroke-width="1.6"/><path d="M47.9,91.5H54.5M91.5,130V136.8M128.5,53L124.8,57.5" stroke="#8a8a8a" stroke-width="1.2" fill="none"/><g stroke="#000" stroke-width="1.5" stroke-linejoin="round"><polygon points="54.3,83.1 81.5,57.5 124.8,57.5 103.6,85" fill="url(#vc1)"/><polygon points="54.3,83.1 103.6,85 105.8,130.4 58.6,124" fill="url(#vc2)"/><polygon points="103.6,85 124.8,57.5 125.4,99.7 105.8,130.4" fill="url(#vc3)"/></g><ellipse cx="91.1" cy="70.7" rx="5.5" ry="3.3" fill="#7f7f7f"/><circle cx="80.2" cy="107.6" r="5.5" fill="#7f7f7f"/><ellipse cx="115.6" cy="93.3" rx="3.8" ry="5.6" fill="#7f7f7f"/><path d="M91.5,46.6V70.7M115.6,93H134M80.2,107.6L54.5,134.5" stroke="#1a1a1a" stroke-width="1.4" fill="none"/><path d="M41.3,25.5L18.6,25.5M18.6,25.5L27.8,16.3M18.6,25.5L27.8,34.7" fill="none" stroke="#a3a3a3" stroke-width="6.2" stroke-linecap="round" stroke-linejoin="round"/><path d="M90.4,13.6L90.4,36.2M90.4,36.2L81.2,27.0M90.4,36.2L99.6,27.0" fill="none" stroke="#222" stroke-width="6.2" stroke-linecap="round" stroke-linejoin="round"/><path d="M162.6,21.0L146.6,37.6M146.6,37.6L146.4,24.6M146.6,37.6L159.6,37.4" fill="none" stroke="#222" stroke-width="6.2" stroke-linecap="round" stroke-linejoin="round"/><path d="M14.1,92.9L37.0,92.9M37.0,92.9L27.8,102.1M37.0,92.9L27.8,83.7" fill="none" stroke="#222" stroke-width="6.2" stroke-linecap="round" stroke-linejoin="round"/><path d="M168.0,92.5L145.2,92.5M145.2,92.5L154.4,83.3M145.2,92.5L154.4,101.7" fill="none" stroke="#222" stroke-width="6.2" stroke-linecap="round" stroke-linejoin="round"/><path d="M21.8,163.7L37.6,147.6M37.6,147.6L37.7,160.6M37.6,147.6L24.6,147.7" fill="none" stroke="#222" stroke-width="6.2" stroke-linecap="round" stroke-linejoin="round"/><path d="M92.0,169.9L92.0,147.6M92.0,147.6L101.2,156.8M92.0,147.6L82.8,156.8" fill="none" stroke="#222" stroke-width="6.2" stroke-linecap="round" stroke-linejoin="round"/></svg></div>
<div class="hl" style="left:2px;top:1904px"></div>
<div class="hl" style="left:98px;top:2000px"></div>
<div class="tb wh" style="left:4px;top:1906px"><svg width="92" height="92" viewBox="0 0 92 92"><g fill="none" stroke="#000" stroke-width="4.3" stroke-linejoin="miter"><polygon points="45.1,13.7 71.6,31.1 71.6,61.2 45.4,78.5 18.4,61.8 18.4,31.1"/><polyline points="18.4,31.1 45.4,47.1 71.6,31.1"/><path d="M45.4,47.1V78.5"/></g></svg></div>
<div class="tb wh" style="left:100px;top:1906px"><svg width="92" height="92" viewBox="0 0 92 92"><g fill="none" stroke="#000" stroke-width="4.3" stroke-linejoin="miter"><polygon points="45,16.4 71.9,29.1 67.9,59.8 45,76.5 22.4,59.8 19.1,29.1"/><polyline points="19.1,29.1 45,45.1 71.9,29.1"/><path d="M45,45.1V76.5"/></g></svg></div>
<div class="tb wh" style="left:4px;top:2002px"><svg width="92" height="92" viewBox="0 0 92 92"><rect x="8.6" y="22.8" width="74.4" height="49" fill="#fefefe" stroke="#000" stroke-width="3.6"/><path d="M10,26.2H82" stroke="#000" stroke-width="1"/><path d="M13.5,26V72M72.3,26V72" stroke="#000" stroke-width="1"/><polygon points="39.6,29.3 47.5,40.2 60.9,40.6 53.0,51.5 56.7,64.3 44.0,60.2 32.9,67.7 32.9,54.3 22.3,46.0 35.1,41.9" fill="#5a69e2" stroke="#5a69e2" stroke-width="1.6" stroke-linejoin="round"/></svg></div>
<div class="tb wh" style="left:100px;top:2002px"><svg width="92" height="92" viewBox="0 0 92 92"><rect x="8.6" y="22.8" width="74.4" height="49" fill="#fefefe" stroke="#000" stroke-width="3.6"/><path d="M10,26.2H82" stroke="#000" stroke-width="1"/><path d="M14,26V72M43,26V72M72.1,26V72M14,48.4H72.1" stroke="#000" stroke-width="1"/><polygon points="26.1,26.9 30.2,32.9 37.5,33.0 33.0,38.8 35.2,45.7 28.4,43.2 22.4,47.5 22.7,40.2 16.8,35.9 23.8,33.8" fill="#5a69e2" stroke="#5a69e2" stroke-width="1.6" stroke-linejoin="round"/><polygon points="26.1,48.3 30.2,54.3 37.5,54.4 33.0,60.2 35.2,67.1 28.4,64.6 22.4,68.9 22.7,61.6 16.8,57.3 23.8,55.2" fill="#5a69e2" stroke="#5a69e2" stroke-width="1.6" stroke-linejoin="round"/><polygon points="55.5,26.9 59.6,32.9 66.9,33.0 62.4,38.8 64.6,45.7 57.8,43.2 51.8,47.5 52.1,40.2 46.2,35.9 53.2,33.8" fill="#5a69e2" stroke="#5a69e2" stroke-width="1.6" stroke-linejoin="round"/><polygon points="55.5,48.3 59.6,54.3 66.9,54.4 62.4,60.2 64.6,67.1 57.8,64.6 51.8,68.9 52.1,61.6 46.2,57.3 53.2,55.2" fill="#5a69e2" stroke="#5a69e2" stroke-width="1.6" stroke-linejoin="round"/></svg></div>
<aside class="rp"></aside><div class="rp-in"></div>
<svg style="left:2988px;top:120px" width="18" height="50" viewBox="2988 120 18 50"><path d="M3004,123V144L2991,133.5Z" fill="#c2c2c2"/><path d="M2990,146V168L3004,157Z" fill="#c2c2c2"/></svg>
<div style="left:2989px;top:1100px;width:15px;height:15px;border-radius:50%;background:#cacaca"></div>
<div class="ph" style="top:120px"></div>
<h2 class="t" style='left:3011.81px;top:126.81px;font-size:22.67px;transform:scaleX(0.9792);color:#fff;'>Objects</h2>
<svg style="left:3044px;top:160px" width="390" height="28" viewBox="3044 160 390 28" ><path d="M3049,165H3058.5L3061,168H3075.2V183H3049Z" fill="#fff" stroke="#000" stroke-width="1.7"/><path d="M3049,168.4H3075.2V183H3049Z" fill="#52aaf6" stroke="#000" stroke-width="1.8"/><path d="M3109,165H3128.5V170.2H3133.2V183H3118.5V178.2H3109Z" fill="#62a4f2" stroke="#000" stroke-width="1.7" stroke-linejoin="miter"/><rect x="3177.4" y="170.2" width="13.6" height="13" fill="#fff" stroke="#c2c2c2" stroke-width="1.7"/><path d="M3167,165H3181.6V170.2H3177.4V178.6H3167Z" fill="#62a4f2" stroke="#000" stroke-width="1.7"/><rect x="3225" y="165" width="14.6" height="13.6" fill="none" stroke="#c2c2c2" stroke-width="1.7"/><rect x="3235.4" y="170.2" width="13.8" height="13" fill="none" stroke="#c2c2c2" stroke-width="1.7"/><rect x="3235.2" y="170.2" width="4.6" height="8.4" fill="#62a4f2" stroke="#000" stroke-width="1.7"/><path d="M3283.4,168.6C3291,163.8 3303,163.8 3310.6,168.6V183C3303,178.2 3291,178.2 3283.4,183Z" fill="#9aa4b6" stroke="#111" stroke-width="1.5" stroke-linejoin="round"/><path d="M3282.2,176C3291,170.6 3303,170.6 3311.8,176" fill="none" stroke="#1a2ae0" stroke-width="1.7"/><circle cx="3356.7" cy="174.3" r="6" fill="#5c7cf4"/><path d="M3349.2,167C3345,171 3345,178 3349,182" fill="none" stroke="#000" stroke-width="1.9"/><path d="M3345.6,166.4L3349.8,166.2L3349.4,170Z" fill="#000"/><path d="M3364.4,166.6C3368.6,171 3368.4,178 3364.6,181.8" fill="none" stroke="#000" stroke-width="1.9"/><path d="M3368.2,182.6L3364,182.8L3364.4,179Z" fill="#000"/><rect x="3403" y="165" width="24.2" height="18" fill="#fff" stroke="#000" stroke-width="1.7"/><rect x="3407.6" y="169.4" width="15" height="9.4" fill="none" stroke="#4a5cf0" stroke-width="1.6"/><circle cx="3415.1" cy="166.4" r="1.8" fill="#52c840"/><circle cx="3415.1" cy="181.8" r="1.8" fill="#52c840"/><circle cx="3405.4" cy="174.1" r="1.8" fill="#52c840"/><circle cx="3424.8" cy="174.1" r="1.8" fill="#52c840"/></svg>
<svg style="left:3030px;top:198px" width="16" height="16" viewBox="0 0 16 16" shape-rendering="crispEdges"><path d="M6,0h2v2h-2zM8,0h2v2h-2zM4,2h2v2h-2zM10,2h2v2h-2zM2,4h2v2h-2zM12,4h2v2h-2zM0,6h2v2h-2zM14,6h2v2h-2zM0,8h2v2h-2zM14,8h2v2h-2zM2,10h2v2h-2zM12,10h2v2h-2zM4,12h2v2h-2zM10,12h2v2h-2zM6,14h2v2h-2zM8,14h2v2h-2zM6,6h4v4h-4z" fill="#0c0c0c"/></svg>
<span class="t" style='left:3051.82px;top:194.21px;font-size:22.67px;transform:scaleX(0.9512);color:#434343;'>Camera 1</span>
<svg style="left:3030px;top:232px" width="16" height="16" viewBox="0 0 16 16" shape-rendering="crispEdges"><path d="M6,0h2v2h-2zM8,0h2v2h-2zM4,2h2v2h-2zM10,2h2v2h-2zM2,4h2v2h-2zM12,4h2v2h-2zM0,6h2v2h-2zM14,6h2v2h-2zM0,8h2v2h-2zM14,8h2v2h-2zM2,10h2v2h-2zM12,10h2v2h-2zM4,12h2v2h-2zM10,12h2v2h-2zM6,14h2v2h-2zM8,14h2v2h-2zM6,6h4v4h-4z" fill="#0c0c0c"/></svg>
<span class="t" style='left:3052.15px;top:228.31px;font-size:22.67px;transform:scaleX(0.9110);color:#434343;'>Light 1</span>
<svg style="left:3030px;top:266px" width="16" height="16" viewBox="0 0 16 16" shape-rendering="crispEdges"><path d="M6,0h2v2h-2zM8,0h2v2h-2zM4,2h2v2h-2zM10,2h2v2h-2zM2,4h2v2h-2zM12,4h2v2h-2zM0,6h2v2h-2zM14,6h2v2h-2zM0,8h2v2h-2zM14,8h2v2h-2zM2,10h2v2h-2zM12,10h2v2h-2zM4,12h2v2h-2zM10,12h2v2h-2zM6,14h2v2h-2zM8,14h2v2h-2zM6,6h4v4h-4z" fill="#0c0c0c"/></svg>
<span class="t" style='left:3083.87px;top:262.51px;font-size:22.67px;transform:scaleX(0.9558);color:#434343;'>Folder</span>
<svg style="left:3030px;top:300px" width="16" height="16" viewBox="0 0 16 16" shape-rendering="crispEdges"><path d="M6,0h2v2h-2zM8,0h2v2h-2zM4,2h2v2h-2zM10,2h2v2h-2zM2,4h2v2h-2zM12,4h2v2h-2zM0,6h2v2h-2zM14,6h2v2h-2zM0,8h2v2h-2zM14,8h2v2h-2zM2,10h2v2h-2zM12,10h2v2h-2zM4,12h2v2h-2zM10,12h2v2h-2zM6,14h2v2h-2zM8,14h2v2h-2zM6,6h4v4h-4z" fill="#0c0c0c"/></svg>
<span class="t" style='left:3052.09px;top:296.51px;font-size:22.67px;transform:scaleX(0.9417);color:#434343;'>Bolt 1</span>
<svg style="left:3012px;top:263px" width="13" height="22" viewBox="0 0 13 22"><path d="M2,3.2L10.2,11.2L2,19.2Z" fill="#fff" stroke="#000" stroke-width="1.9"/></svg>
<svg style="left:3050px;top:264px" width="28" height="20" viewBox="0 0 28 20"><path d="M1,1.5H10L12.5,4.5H27V19H1Z" fill="#fff" stroke="#111" stroke-width="1.6"/><path d="M1,4.8H27V19H1Z" fill="#55acf8" stroke="#111" stroke-width="1.8"/></svg>
<div class="rowsel"></div>
<svg style="left:3030px;top:334px" width="16" height="16" viewBox="0 0 16 16" shape-rendering="crispEdges"><path d="M6,0h2v2h-2zM8,0h2v2h-2zM4,2h2v2h-2zM10,2h2v2h-2zM2,4h2v2h-2zM12,4h2v2h-2zM0,6h2v2h-2zM14,6h2v2h-2zM0,8h2v2h-2zM14,8h2v2h-2zM2,10h2v2h-2zM12,10h2v2h-2zM4,12h2v2h-2zM10,12h2v2h-2zM6,14h2v2h-2zM8,14h2v2h-2zM6,6h4v4h-4z" fill="#0c0c0c"/></svg>
<span class="t" style='left:3052.90px;top:330.61px;font-size:22.67px;transform:scaleX(0.9615);color:#fff;'>Arc Tube 1</span>
<div class="split" style="top:1012px"></div>
<div class="dot3" style="left:3221px;top:1019px"></div>
<div class="dot3" style="left:3231px;top:1019px"></div>
<div class="dot3" style="left:3241px;top:1019px"></div>
<div class="ph" style="top:1032px"></div>
<h2 class="t" style='left:3011.54px;top:1039.11px;font-size:22.67px;transform:scaleX(0.9464);color:#fff;'>Selection</h2>
<svg style="left:3030px;top:1074px" width="16" height="16" viewBox="0 0 16 16" shape-rendering="crispEdges"><path d="M6,0h2v2h-2zM8,0h2v2h-2zM4,2h2v2h-2zM10,2h2v2h-2zM2,4h2v2h-2zM12,4h2v2h-2zM0,6h2v2h-2zM14,6h2v2h-2zM0,8h2v2h-2zM14,8h2v2h-2zM2,10h2v2h-2zM12,10h2v2h-2zM4,12h2v2h-2zM10,12h2v2h-2zM6,14h2v2h-2zM8,14h2v2h-2zM6,6h4v4h-4z" fill="#0c0c0c"/></svg>
<span class="t" style='left:3051.80px;top:1070.31px;font-size:22.67px;transform:scaleX(0.9716);color:#434343;'>Arc Tube 1</span>
<div class="split" style="top:1162px"></div>
<div class="dot3" style="left:3221px;top:1169px"></div>
<div class="dot3" style="left:3231px;top:1169px"></div>
<div class="dot3" style="left:3241px;top:1169px"></div>
<div class="ph" style="top:1182px"></div>
<h2 class="t" style='left:3011.63px;top:1189.41px;font-size:22.67px;transform:scaleX(0.9779);color:#fff;'>Properties</h2>
<section class="props"></section>
<div style="left:3008px;top:2040px;width:448px;height:60px;background:linear-gradient(rgba(0,0,0,0),rgba(0,0,0,0.065))"></div>
<span class="t" style='left:3193.89px;top:1225.16px;font-size:22.97px;transform:scaleX(0.9314);'>Position</span>
<span class="t" style='left:3011.36px;top:1270.76px;font-size:22.97px;transform:scaleX(0.9536);'>X</span>
<div class="fld" style="left:3030.4px;top:1262.6px;width:119.4px"></div>
<span class="t" style='left:3011.36px;top:1362.76px;font-size:22.97px;transform:scaleX(0.9536);'>X</span>
<div class="fld" style="left:3030.4px;top:1354.6px;width:119.4px"></div>
<span class="t" style='left:3043.75px;top:1362.76px;font-size:22.97px;transform:scaleX(0.9404);'>0.0</span>
<span class="t" style='left:3159.13px;top:1270.76px;font-size:22.97px;transform:scaleX(1.0227);'>Y</span>
<div class="fld" style="left:3178.2px;top:1262.6px;width:121.6px"></div>
<span class="t" style='left:3159.13px;top:1362.76px;font-size:22.97px;transform:scaleX(1.0227);'>Y</span>
<div class="fld" style="left:3178.2px;top:1354.6px;width:121.6px"></div>
<span class="t" style='left:3191.55px;top:1362.76px;font-size:22.97px;transform:scaleX(0.9404);'>0.0</span>
<span class="t" style='left:3308.64px;top:1270.76px;font-size:22.97px;transform:scaleX(1.1082);'>Z</span>
<div class="fld" style="left:3328.2px;top:1262.6px;width:119.6px"></div>
<span class="t" style='left:3308.64px;top:1362.76px;font-size:22.97px;transform:scaleX(1.1082);'>Z</span>
<div class="fld" style="left:3328.2px;top:1354.6px;width:119.6px"></div>
<span class="t" style='left:3341.55px;top:1362.76px;font-size:22.97px;transform:scaleX(0.9404);'>0.0</span>
<span class="t" style='left:3179.75px;top:1316.96px;font-size:22.97px;transform:scaleX(0.9296);'>Orientation</span>
<span class="t" style='left:3194.35px;top:1408.66px;font-size:22.97px;transform:scaleX(0.9793);'>Texture</span>
<div style="left:3013px;top:1442.6px;width:438.4px;height:38.6px;background:#fff;border:2px solid #c9c9c9;border-radius:7px"></div>
<span class="t" style='left:3025.83px;top:1450.96px;font-size:22.97px;transform:scaleX(0.9643);color:#3a3a3a;'>Default Texture</span>
<svg style="left:3424px;top:1457.6px" width="18" height="11" viewBox="0 0 18 11"><path d="M1,1L9.0,10L17,1" fill="none" stroke="#3c3c3c" stroke-width="2" stroke-linecap="round" stroke-linejoin="round"/></svg>
<span class="t" style='left:3069.19px;top:1506.76px;font-size:22.97px;transform:scaleX(0.9876);'>Bend Radius</span>
<div class="fld" style="left:3222.2px;top:1498.2px;width:117.8px"></div>
<span class="t" style='left:3235.27px;top:1506.76px;font-size:22.97px;transform:scaleX(0.9816);'>6.0</span>
<div class="knob" style="left:3347.8px;top:1498.0px"></div><div style="left:3363.8px;top:1506.6px;width:8px;height:3px;background:#161616"></div><div style="left:3363.8px;top:1510.6px;width:8px;height:3px;background:#bcbcbc"></div>
<span class="t" style='left:3061.76px;top:1574.86px;font-size:22.97px;transform:scaleX(0.9514);'>Tube Diameter</span>
<div class="fld" style="left:3228.2px;top:1566.3px;width:117.8px"></div>
<span class="t" style='left:3240.86px;top:1574.86px;font-size:22.97px;transform:scaleX(0.9605);'>1.75</span>
<div class="knob" style="left:3353.8px;top:1566.1px"></div><div style="left:3369.8px;top:1590.7px;width:8px;height:3px;background:#161616"></div><div style="left:3369.8px;top:1594.7px;width:8px;height:3px;background:#bcbcbc"></div>
<span class="t" style='left:3085.56px;top:1642.86px;font-size:22.97px;transform:scaleX(0.9599);'>Tube Wall</span>
<div class="fld" style="left:3204.1px;top:1634.3px;width:117.8px"></div>
<span class="t" style='left:3217.65px;top:1642.86px;font-size:22.97px;transform:scaleX(0.9381);'>0.095</span>
<div class="knob" style="left:3329.8px;top:1634.1px"></div><div style="left:3337.8px;top:1650.7px;width:8px;height:3px;background:#161616"></div><div style="left:3337.8px;top:1654.7px;width:8px;height:3px;background:#bcbcbc"></div>
<span class="t" style='left:3057.39px;top:1710.76px;font-size:22.97px;transform:scaleX(0.9861);'>Min Bend Span</span>
<div class="fld" style="left:3233.8px;top:1702.2px;width:117.8px"></div>
<span class="t" style='left:3247.34px;top:1710.76px;font-size:22.97px;transform:scaleX(0.9569);'>0.0</span>
<div class="knob" style="left:3359.8px;top:1702.0px"></div><div style="left:3375.8px;top:1710.6px;width:8px;height:3px;background:#161616"></div><div style="left:3375.8px;top:1714.6px;width:8px;height:3px;background:#bcbcbc"></div>
<div id="help" style="left:202px;top:176px;width:600px;height:430px"></div>
<p class="t" style='left:215.26px;top:190.87px;font-size:22.24px;transform:scaleX(0.9910);color:#383838;-webkit-text-stroke-width:0.2px;filter:blur(0.45px);'>[ESC] - Unselect</p>
<p class="t" style='left:215.93px;top:226.87px;font-size:22.24px;transform:scaleX(0.9806);color:#383838;-webkit-text-stroke-width:0.2px;filter:blur(0.45px);'>Shift + [Q] - Select &amp; Move Closest</p>
<p class="t" style='left:215.71px;top:287.07px;font-size:22.24px;transform:scaleX(0.9827);color:#383838;-webkit-text-stroke-width:0.2px;filter:blur(0.45px);'>Click + Drag to Select.</p>
<p class="t" style='left:215.27px;top:323.07px;font-size:22.24px;transform:scaleX(0.9831);color:#383838;-webkit-text-stroke-width:0.2px;filter:blur(0.45px);'>[Shift] (hold) + Click, Drag - Add Remove from selection.</p>
<p class="t" style='left:215.27px;top:358.87px;font-size:22.24px;transform:scaleX(0.9847);color:#383838;-webkit-text-stroke-width:0.2px;filter:blur(0.45px);'>[Command | Ctrl] (hold) + Click, Drag - Pan View.</p>
<p class="t" style='left:215.26px;top:394.97px;font-size:22.24px;transform:scaleX(0.9874);color:#383838;-webkit-text-stroke-width:0.2px;filter:blur(0.45px);'>[Option] (hold) + Click, Drag - Rotate View.</p>
<p class="t" style='left:215.93px;top:450.87px;font-size:22.24px;transform:scaleX(0.9771);color:#383838;-webkit-text-stroke-width:0.2px;filter:blur(0.45px);'>Selection Click + Drag to Move Selection.</p>
<p class="t" style='left:215.26px;top:487.17px;font-size:22.24px;transform:scaleX(0.9866);color:#383838;-webkit-text-stroke-width:0.2px;filter:blur(0.45px);'>[X] [Y] [Z] (hold) - Lock to plane.</p>
<p class="t" style='left:215.24px;top:523.17px;font-size:22.24px;color:#383838;-webkit-text-stroke-width:0.2px;filter:blur(0.45px);'>[H] - Toggle Help.</p>
<svg style="left:216px;top:560px" width="28" height="28" viewBox="0 0 28 28"><rect x="2.5" y="2.5" width="23" height="23" fill="none" stroke="#b9b9b9" stroke-width="1.6"/><rect x="7" y="7" width="14" height="14" fill="none" stroke="#b3b3b3" stroke-width="2"/><path d="M5,1V3M9,1V3M13,1V3M17,1V3M21,1V3M5,25V27M9,25V27M13,25V27M17,25V27M21,25V27M1,5H3M1,9H3M1,13H3M1,17H3M1,21H3M25,5H27M25,9H27M25,13H27M25,17H27M25,21H27" stroke="#b9b9b9" stroke-width="1.6"/></svg>
<span class="t" style='left:251.13px;top:564.76px;font-size:19.77px;transform:scaleX(1.0560);color:#c4c4c4;filter:blur(0.45px);'>FPS 58</span>
<span class="t" style='left:218.82px;top:1992.87px;font-size:22.24px;color:#383838;-webkit-text-stroke-width:0.2px;filter:blur(0.45px);'>Folder &gt; ...</span>
<div id="winframe"></div>
</main></body></html>
